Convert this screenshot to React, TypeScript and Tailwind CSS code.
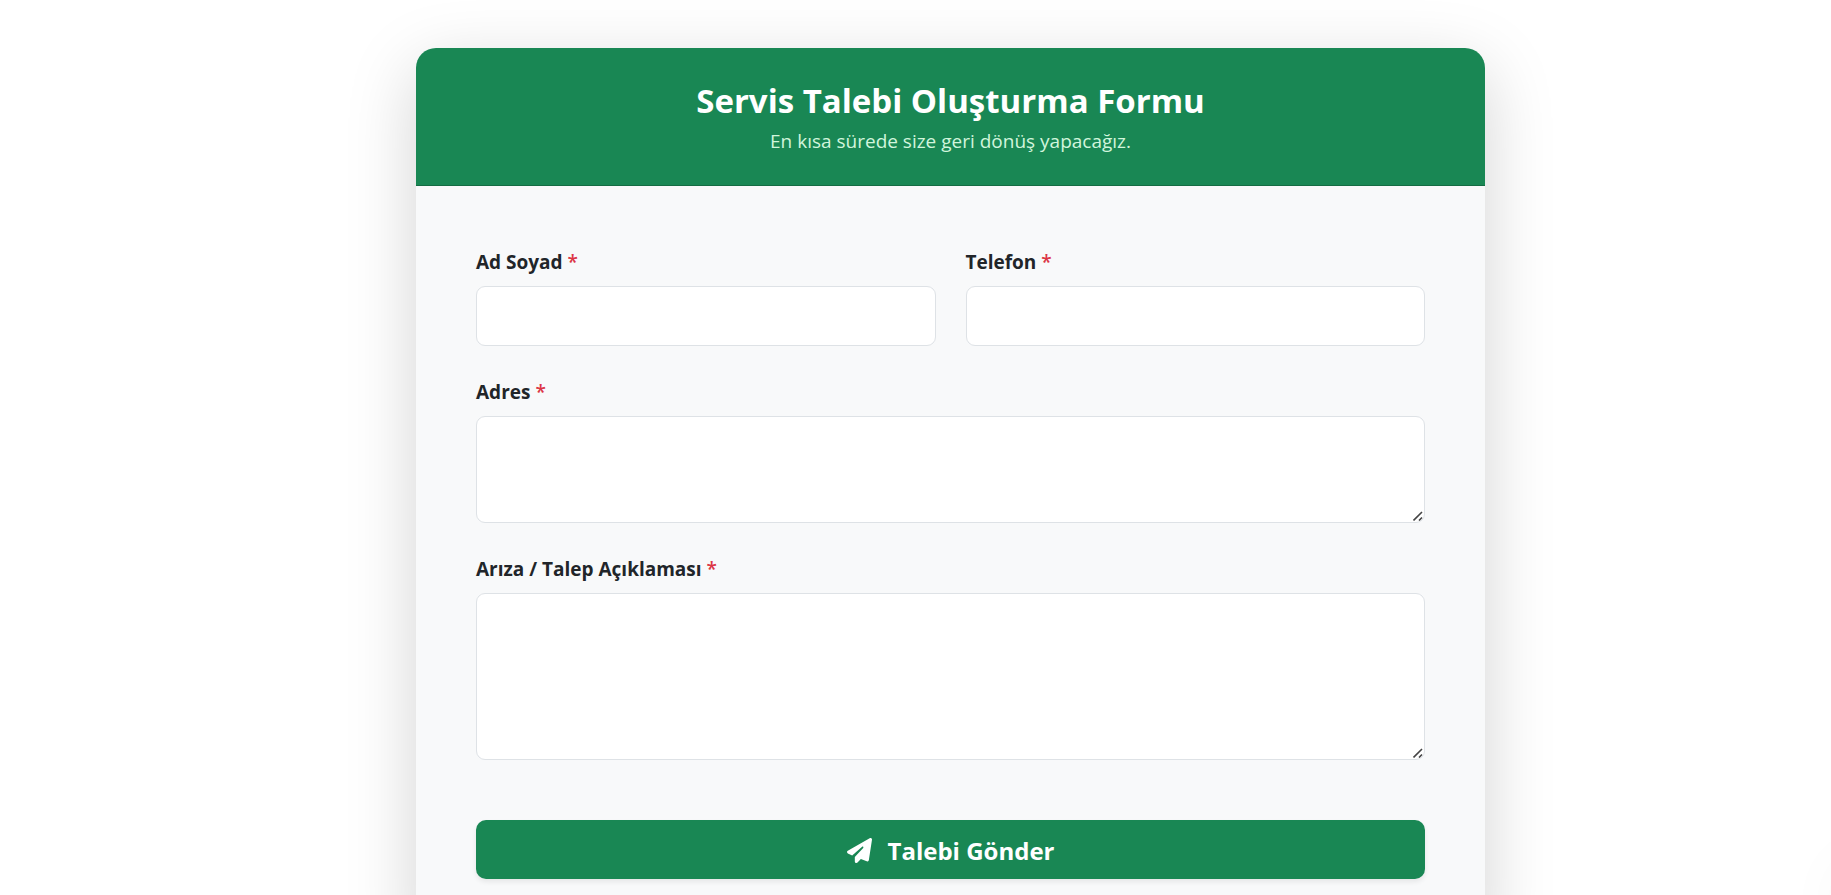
import React from 'react';
import { FaPaperPlane } from 'react-icons/fa6';

interface FieldProps {
  id: string;
  label: string;
  children: React.ReactNode;
}

interface TextAreaProps {
  id: string;
  className: string;
}

const controlClass =
  'block w-full rounded-[9px] border border-[#dee2e6] bg-white px-5 py-3 text-xl text-[#212529] outline-none focus:border-[#198754]';

const Field: React.FC<FieldProps> = ({ id, label, children }) => {
  return (
    <div>
      <label htmlFor={id} className="mb-2 block text-[19px] leading-8 font-bold text-[#212529]">
        {label} <span className="font-semibold text-[#dc3545]">*</span>
      </label>
      {children}
    </div>
  );
};

// Native resizer is replaced by a slightly larger grip that lets clicks through
const TextArea: React.FC<TextAreaProps> = ({ id, className }) => {
  return (
    <div className="relative">
      <textarea
        id={id}
        required
        className={`${controlClass} resize-y [&::-webkit-resizer]:bg-transparent ${className}`}
      />
      <svg
        viewBox="0 0 10 10"
        className="pointer-events-none absolute right-[2px] bottom-[2px] size-2.5"
        stroke="#444"
        strokeWidth="1.6"
        aria-hidden="true"
      >
        <path d="M0.5 9.5 L9 1 M6 9.5 L9 6.5" />
      </svg>
    </div>
  );
};

const App: React.FC = () => {
  return (
    <div className="min-h-screen overflow-hidden bg-white py-12 pr-4 pl-4 font-['Open_Sans','Noto_Sans',sans-serif] lg:pr-0 lg:pl-[70px]">
      <div className="mx-auto max-w-[1069px] overflow-hidden rounded-[20px] bg-[#f8f9fa] shadow-[0_20px_70px_rgba(0,0,0,0.175)]">
        <div className="border-b border-[#146c43] bg-[#198754] px-5 pt-8 pb-7 text-center">
          <h2 className="mb-1 text-[33px] leading-[42px] font-bold text-white">Servis Talebi Oluşturma Formu</h2>
          <p className="text-[19px] leading-[31px] text-[#d1f5dc]">En kısa sürede size geri dönüş yapacağız.</p>
        </div>

        <form className="p-6 md:p-[60px]" onSubmit={(e) => e.preventDefault()}>
          <div className="grid gap-[30px]">
            <div className="grid gap-[30px] md:grid-cols-2">
              <Field id="name" label="Ad Soyad">
                <input id="name" type="text" required className={`${controlClass} h-[60px]`} />
              </Field>
              <Field id="phone" label="Telefon">
                <input id="phone" type="tel" required className={`${controlClass} h-[60px]`} />
              </Field>
            </div>

            <Field id="address" label="Adres">
              <TextArea id="address" className="h-[107px]" />
            </Field>

            <Field id="description" label="Arıza / Talep Açıklaması">
              <TextArea id="description" className="h-[167px]" />
            </Field>
          </div>

          <button
            type="submit"
            className="mt-[60px] flex h-[59px] w-full items-center justify-center gap-4 rounded-[10px] bg-[#198754] pt-0.5 text-2xl font-bold text-white shadow-[0_3px_5px_rgba(0,0,0,0.075)] hover:bg-[#157347]"
          >
            <FaPaperPlane className="size-[25px]" />
            Talebi Gönder
          </button>
        </form>
      </div>

      <div
        aria-hidden="true"
        className="pointer-events-none fixed -right-20 -bottom-10 size-16 rounded-full shadow-[0_0_70px_rgba(0,0,0,0.08)]"
      />
    </div>
  );
};

export default App;
